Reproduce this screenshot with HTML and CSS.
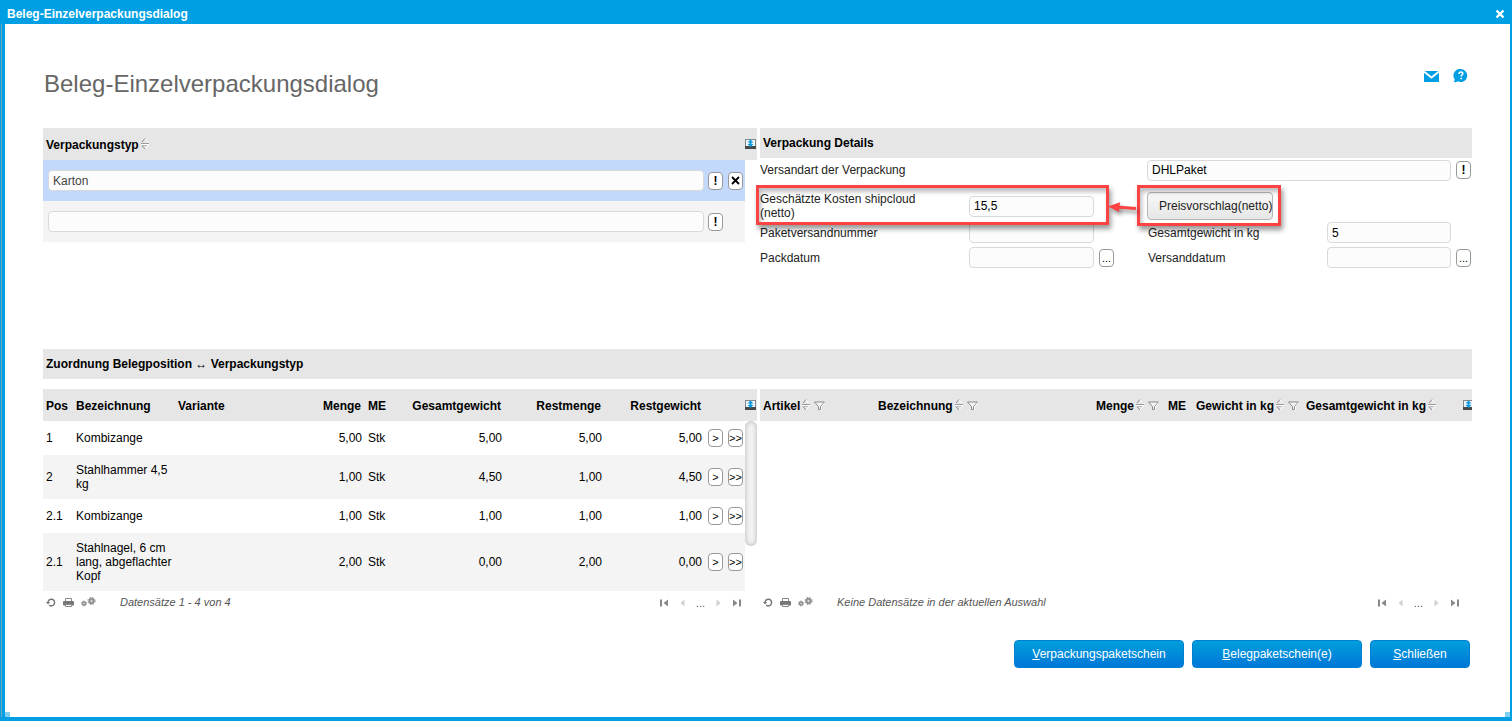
FILE: index.html
```html
<!DOCTYPE html>
<html lang="de">
<head>
<meta charset="utf-8">
<title>Beleg-Einzelverpackungsdialog</title>
<link rel="stylesheet" href="styles.css">
</head>
<body>
<svg class="defs" width="0" height="0" aria-hidden="true">
  <symbol id="sort" viewBox="0 0 8 12">
    <path d="M4 1L7 4.500M7 7.500L4 11" fill="none" stroke="#fff"/>
    <path d="M0 6.500h8" stroke="#fff"/><path d="M0 5.500h8" stroke="#999"/>
    <path d="M4 .5L1 4M1 7.500L4 11" fill="none" stroke="#888"/><path d="M1 7.500h5" stroke="#bbb"/>
  </symbol>
  <symbol id="filter" viewBox="0 0 12 10">
    <path d="M.5 1h10L6.500 5.500v3l-2 0v-3z" fill="#f6f6f6" stroke="#888"/><path d="M11 1.500L7.500 5.500V9.500" fill="none" stroke="#fff"/>
  </symbol>
  <symbol id="export" viewBox="0 0 11 10">
    <path d="M0 0h11v8H0z" fill="#7f898e"/><path d="M1 1h9v6H1z" fill="#eef5f8"/><path d="M0 7h11v3H0z" fill="#45494c"/>
    <path d="M5.500 .5L8.500 3.500H6.500V5h2L5.500 8L2.500 5h2V3.500h-2z" fill="#0b9ae0"/>
  </symbol>
  <symbol id="reload" viewBox="0 0 10 9">
    <path d="M2 4.500a3.300 3.300 0 1 1 1.200 2.600" fill="none" stroke="#777" stroke-width="1.500"/><path d="M0 4h4.200L2 6.500z" fill="#777"/>
  </symbol>
  <symbol id="print" viewBox="0 0 11 9">
    <path d="M2.500 3V.5h6V3" fill="#fff" stroke="#888"/><rect y="3" width="11" height="4.500" rx="1" fill="#777"/><path d="M2.500 6.500h6v2h-6z" fill="#fff" stroke="#888"/>
  </symbol>
  <symbol id="gears" viewBox="0 0 15 10">
    <g fill="#999" stroke="#888"><circle cx="10.500" cy="4" r="2.700"/><circle cx="10.500" cy="4" r="3.600" fill="none" stroke-dasharray="1.500 1.400"/><circle cx="3" cy="6.500" r="1.800"/><circle cx="3" cy="6.500" r="2.500" fill="none" stroke-dasharray="1 1"/></g>
    <circle cx="10.500" cy="4" r="1" fill="#ddd"/><circle cx="3" cy="6.500" r=".8" fill="#ddd"/>
  </symbol>
  <symbol id="first" viewBox="0 0 9 8"><path d="M0 .5h2v7H0zM8 .5v7L3.500 4z" fill="#888"/></symbol>
  <symbol id="last" viewBox="0 0 9 8"><path d="M7 .5h2v7H7zM1 .5v7L5.500 4z" fill="#888"/></symbol>
  <symbol id="prev" viewBox="0 0 5 8"><path d="M4.500 .5v7L.5 4z" fill="#d0d0d0"/></symbol>
  <symbol id="next" viewBox="0 0 5 8"><path d="M.5 .5v7L4.500 4z" fill="#d0d0d0"/></symbol>
</svg>

<header class="titlebar">
  <span>Beleg-Einzelverpackungsdialog</span>
  <button class="plain" aria-label="Dialog schließen"><svg width="10" height="10" viewBox="0 0 10 10"><path d="M1.500 1.500l7 7M8.500 1.500l-7 7" stroke="#fff" stroke-width="2.400"/></svg></button>
</header>

<main class="dialog">
  <div class="heading">
    <h1>Beleg-Einzelverpackungsdialog</h1>
    <div class="heading-tools">
      <button class="plain" aria-label="E-Mail"><svg width="15" height="11" viewBox="0 0 15 11"><path d="M0 0h15v11H0z" fill="#009fe3"/><path d="M0 .5L7.500 6.500L15 .5" fill="none" stroke="#fff" stroke-width="1.800"/></svg></button>
      <button class="plain" aria-label="Hilfe"><svg width="15" height="14" viewBox="0 0 15 14"><path d="M8 0a6.500 6.500 0 1 1-3.200 12.300C3.500 13.200 1.500 13.300.5 13c.9-.8 1.200-1.600 1.200-2.800A6.500 6.500 0 0 1 8 0z" fill="#009fe3"/><path d="M6 4.900c0-1.200.8-1.900 1.900-1.900s1.900.6 1.900 1.600c0 1.300-1.600 1.300-1.600 2.900M8.200 8.700v1.500" fill="none" stroke="#fff" stroke-width="1.500"/></svg></button>
    </div>
  </div>

  <div class="columns top">
    <section>
      <table class="grid types">
        <colgroup><col><col class="w20"><col class="w20"><col class="w12"></colgroup>
        <thead><tr><th colspan="3">Verpackungstyp<svg class="sort"><use href="#sort"/></svg></th><th class="tool"><button class="plain" aria-label="Exportieren"><svg width="11" height="10"><use href="#export"/></svg></button></th></tr></thead>
        <tbody>
          <tr class="selected"><td><input class="field muted" aria-label="Verpackungstyp 1" value="Karton"></td><td><button class="mini bold">!</button></td><td><button class="mini" aria-label="Löschen"><svg width="9" height="9" viewBox="0 0 9 9"><path d="M1 1l7 7M8 1l-7 7" stroke="#000" stroke-width="1.800"/></svg></button></td><td></td></tr>
          <tr><td><input class="field" aria-label="Verpackungstyp 2"></td><td><button class="mini bold">!</button></td><td></td><td></td></tr>
        </tbody>
      </table>
    </section>

    <section>
      <h2 class="bar">Verpackung Details</h2>
      <form class="details">
        <label class="art" for="art">Versandart der Verpackung</label>
        <input class="field art-field" id="art" value="DHLPaket">
        <div class="after"><button type="button" class="mini bold">!</button></div>

        <label class="kosten" for="kosten">Geschätzte Kosten shipcloud (netto)</label>
        <div class="kosten"><input class="field" id="kosten" value="15,5"></div>
        <div class="kosten preis"><button type="button" class="suggest">Preisvorschlag(netto)</button></div>

        <label class="start" for="nummer">Paketversandnummer</label>
        <input class="field" id="nummer">
        <label class="right-label" for="gewicht">Gesamtgewicht in kg</label>
        <input class="field" id="gewicht" value="5">

        <label class="start" for="pack">Packdatum</label>
        <input class="field" id="pack">
        <div class="after-left"><button type="button" class="mini">...</button></div>
        <label class="right-label" for="versand">Versanddatum</label>
        <input class="field" id="versand">
        <div class="after"><button type="button" class="mini">...</button></div>

        <div class="mark mark-cost"></div>
        <div class="mark mark-price"></div>
        <svg class="arrow" width="30" height="16" viewBox="0 0 30 16"><path d="M29 8.500L9 7" stroke="#fc4242" stroke-width="3"/><path d="M1 6.500L13 2.200L12 12z" fill="#fc4242"/></svg>
      </form>
    </section>
  </div>

  <h2 class="bar">Zuordnung Belegposition ↔ Verpackungstyp</h2>

  <div class="columns lists">
    <section class="list">
      <div class="scroll">
      <table class="grid positions">
        <colgroup><col class="w30"><col class="w102"><col><col class="w100"><col class="w40"><col class="w100"><col class="w100"><col class="w100"><col class="w20"><col class="w20"><col class="w12"></colgroup>
        <thead><tr><th>Pos</th><th>Bezeichnung</th><th>Variante</th><th class="num">Menge</th><th>ME</th><th class="num">Gesamtgewicht</th><th class="num">Restmenge</th><th class="num">Restgewicht</th><th></th><th></th><th class="tool"><button class="plain" aria-label="Exportieren"><svg width="11" height="10"><use href="#export"/></svg></button></th></tr></thead>
        <tbody>
          <tr><td>1</td><td>Kombizange</td><td></td><td class="num">5,00</td><td>Stk</td><td class="num">5,00</td><td class="num">5,00</td><td class="num">5,00</td><td><button class="mini">&gt;</button></td><td><button class="mini">&gt;&gt;</button></td><td></td></tr>
          <tr><td>2</td><td>Stahlhammer 4,5 kg</td><td></td><td class="num">1,00</td><td>Stk</td><td class="num">4,50</td><td class="num">1,00</td><td class="num">4,50</td><td><button class="mini">&gt;</button></td><td><button class="mini">&gt;&gt;</button></td><td></td></tr>
          <tr><td>2.1</td><td>Kombizange</td><td></td><td class="num">1,00</td><td>Stk</td><td class="num">1,00</td><td class="num">1,00</td><td class="num">1,00</td><td><button class="mini">&gt;</button></td><td><button class="mini">&gt;&gt;</button></td><td></td></tr>
          <tr><td>2.1</td><td>Stahlnagel, 6 cm lang, abgeflachter Kopf</td><td></td><td class="num">2,00</td><td>Stk</td><td class="num">0,00</td><td class="num">2,00</td><td class="num">0,00</td><td><button class="mini">&gt;</button></td><td><button class="mini">&gt;&gt;</button></td><td></td></tr>
        </tbody>
      </table>
      <div class="thumb"></div>
      </div>
      <footer class="status">
        <button class="plain" aria-label="Neu laden"><svg width="10" height="9"><use href="#reload"/></svg></button>
        <button class="plain" aria-label="Drucken"><svg width="11" height="9"><use href="#print"/></svg></button>
        <button class="plain" aria-label="Einstellungen"><svg width="15" height="10"><use href="#gears"/></svg></button>
        <em>Datensätze 1 - 4 von 4</em>
        <nav class="pager"><button class="plain" aria-label="Erste Seite"><svg width="9" height="8"><use href="#first"/></svg></button><button class="plain" aria-label="Vorige Seite"><svg width="5" height="8"><use href="#prev"/></svg></button><span>...</span><button class="plain" aria-label="Nächste Seite"><svg width="5" height="8"><use href="#next"/></svg></button><button class="plain" aria-label="Letzte Seite"><svg width="9" height="8"><use href="#last"/></svg></button></nav>
      </footer>
    </section>

    <section class="list">
      <div class="scroll">
      <table class="grid articles">
        <colgroup><col class="w115"><col><col class="w72"><col class="w28"><col class="w110"><col class="w160"><col class="w9"></colgroup>
        <thead><tr><th>Artikel<svg class="sort"><use href="#sort"/></svg><svg class="filter"><use href="#filter"/></svg></th><th>Bezeichnung<svg class="sort"><use href="#sort"/></svg><svg class="filter"><use href="#filter"/></svg></th><th>Menge<svg class="sort"><use href="#sort"/></svg><svg class="filter"><use href="#filter"/></svg></th><th>ME</th><th>Gewicht in kg<svg class="sort"><use href="#sort"/></svg><svg class="filter"><use href="#filter"/></svg></th><th>Gesamtgewicht in kg<svg class="sort"><use href="#sort"/></svg></th><th class="tool"><button class="plain" aria-label="Exportieren"><svg width="9" height="10" viewBox="0 0 9 10"><use href="#export" width="11" height="10"/></svg></button></th></tr></thead>
      </table>
      </div>
      <footer class="status">
        <button class="plain" aria-label="Neu laden"><svg width="10" height="9"><use href="#reload"/></svg></button>
        <button class="plain" aria-label="Drucken"><svg width="11" height="9"><use href="#print"/></svg></button>
        <button class="plain" aria-label="Einstellungen"><svg width="15" height="10"><use href="#gears"/></svg></button>
        <em>Keine Datensätze in der aktuellen Auswahl</em>
        <nav class="pager narrow"><button class="plain" aria-label="Erste Seite"><svg width="9" height="8"><use href="#first"/></svg></button><button class="plain" aria-label="Vorige Seite"><svg width="5" height="8"><use href="#prev"/></svg></button><span>...</span><button class="plain" aria-label="Nächste Seite"><svg width="5" height="8"><use href="#next"/></svg></button><button class="plain" aria-label="Letzte Seite"><svg width="9" height="8"><use href="#last"/></svg></button></nav>
      </footer>
    </section>
  </div>

  <div class="actions">
    <button class="primary wide"><u>V</u>erpackungspaketschein</button>
    <button class="primary wide"><u>B</u>elegpaketschein(e)</button>
    <button class="primary"><u>S</u>chließen</button>
  </div>
  <i class="grip grip-left"></i><i class="grip grip-right"></i>
</main>
</body>
</html>
```
FILE: styles.css
```css
* { box-sizing: border-box; }

body {
  margin: 0;
  min-height: 100vh;
  display: flex;
  flex-direction: column;
  background: #009fe3;
  color: #000;
  font: 12px/14px "Liberation Sans", Arial, sans-serif;
}

button, input { font: inherit; color: inherit; }
svg { display: block; }
.defs { position: absolute; }

.plain {
  display: block;
  padding: 0;
  border: 0;
  background: none;
}

.titlebar {
  display: flex;
  align-items: center;
  justify-content: space-between;
  height: 24px;
  padding: 3px 7px 0;
  color: #fff;
  font-weight: bold;
}

.dialog {
  position: relative;
  flex: 1;
  margin: 0 2px 4px 5px;
  padding: 44px 38px 20px;
  background: #fff;
  box-shadow: -3px 0 #009fe3, -4px 0 #6fa9c4;
}

.heading {
  display: flex;
  justify-content: space-between;
  height: 60px;
}

h1 {
  margin: 0;
  padding-left: 1px;
  color: #666;
  font-size: 24px;
  font-weight: normal;
  line-height: 32px;
}

.heading-tools {
  display: flex;
  align-items: center;
  gap: 14px;
  height: 16px;
  padding-right: 4px;
}

.columns {
  display: grid;
  grid-template-columns: 714fr 712fr;
  gap: 3px;
}
.columns > section { min-width: 0; }
.top { min-height: 221px; align-items: start; }
.lists { margin-top: 10px; }

.bar {
  margin: 0;
  padding: 0 3px;
  background: #e6e6e6;
  font-size: 12px;
  line-height: 30px;
}

.grid {
  width: 100%;
  border-collapse: collapse;
  table-layout: fixed;
}
.grid th {
  height: 32px;
  padding: 1px 3px 0;
  background: #e6e6e6;
  text-align: left;
  white-space: nowrap;
}
.grid td { padding: 0 3px; }
.grid .num { text-align: right; }
.grid th.num { padding-right: 4px; }
.grid .tool { padding: 0; }
.grid tbody td:last-child { background: #fff; }
.positions td { height: 34px; padding: 8px 3px; }
.positions td:nth-child(2) { padding-right: 0; }
.positions td:nth-last-child(-n+3) { padding-top: 0; padding-bottom: 0; }
.positions tr:nth-child(even) { background: #f4f4f4; }
.types td { height: 41px; background: #f4f4f4; }
.types td:first-child { padding: 0 1px 0 5px; }
.types .selected td { background: #c3d9fb; }

.w9 { width: 9px; }
.w12 { width: 12px; }
.w20 { width: 20px; }
.w28 { width: 28px; }
.w30 { width: 30px; }
.w40 { width: 40px; }
.w72 { width: 72px; }
.w100 { width: 100px; }
.w102 { width: 102px; }
.w110 { width: 110px; }
.w115 { width: 115px; }
.w160 { width: 160px; }

.sort, .filter { display: inline-block; vertical-align: -1px; }
.sort { width: 8px; height: 12px; margin-left: 2px; }
.filter { width: 12px; height: 10px; margin-left: 4px; }

.field {
  display: block;
  width: 100%;
  min-width: 0;
  height: 21px;
  padding: 0 4px;
  border: 1px solid #d9d9d9;
  border-radius: 4px;
  background: #fcfcfc;
}
.muted { color: #444; }

.mini {
  display: flex;
  align-items: center;
  justify-content: center;
  width: 15px;
  height: 18px;
  padding: 0;
  border: 1px solid #999;
  border-radius: 4px;
  background: #fff;
  font-size: 11px;
}
.mini.bold { font-size: 12px; font-weight: bold; }

.details {
  position: relative;
  display: grid;
  grid-template-columns: 209fr 125fr 53fr 180fr 124fr 21fr;
  grid-template-rows: 24px 38px 25px 25px;
  align-items: center;
}
.details > * { min-width: 0; }
.details label { color: #222; }
.start { grid-column: 1; }
.art { grid-column: 1 / 4; }
.art-field { grid-column: 4 / 6; }
label.kosten { grid-column: 1; padding-right: 40px; }
.kosten { padding-top: 10px; }
.preis { grid-column: 4 / 6; }
.after { grid-column: 6; padding-left: 5px; }
.after-left { padding-left: 5px; }
.right-label { grid-column: 4; padding-left: 1px; }

.suggest {
  display: block;
  height: 28px;
  padding: 0 0 0 11px;
  border: 1px solid #b5b5b5;
  border-radius: 4px;
  background: linear-gradient(#f8f8f8, #e6e6e6);
  color: #222;
}

.mark {
  position: absolute;
  border: 3px solid #fc4242;
  box-shadow: 2px 4px 5px rgba(0, 0, 0, .4), inset 2px 4px 4px rgba(0, 0, 0, .25);
}
.mark-cost { left: -4px; right: 51%; top: 27px; height: 40px; }
.mark-price { left: 53%; top: 27px; width: 144px; height: 41px; }
.arrow { position: absolute; right: 47%; top: 42px; filter: drop-shadow(2px 3px 2px rgba(0, 0, 0, .45)); }

.list { display: flex; flex-direction: column; }
.scroll { position: relative; flex: 1; }
.thumb {
  position: absolute;
  top: 32px;
  right: 0;
  width: 12px;
  height: 125px;
  border-radius: 6px;
  background: #f2f2f2;
  box-shadow: inset 0 0 4px 1px #c4c4c4;
}

.status {
  display: flex;
  align-items: center;
  height: 24px;
  padding: 0 0 2px 3px;
  gap: 7px;
  color: #555;
  font-size: 11px;
}
.status em { margin-left: 17px; }
.pager {
  display: flex;
  align-items: center;
  gap: 11px;
  margin-left: auto;
  padding: 2px 16px 0 0;
}
.pager.narrow { padding-right: 13px; }

.actions {
  display: flex;
  justify-content: flex-end;
  gap: 8px;
  padding: 25px 2px 0 0;
}
.primary {
  min-width: 100px;
  height: 28px;
  padding: 0 10px;
  border: 1px solid #0080cf;
  border-radius: 4px;
  background: linear-gradient(#009fdc, #0077d8);
  color: #fff;
}
.wide { min-width: 170px; }

.grip {
  position: absolute;
  bottom: 0;
  width: 5px;
  height: 5px;
  background: #80cff1;
}
.grip-left { left: 0; }
.grip-right { right: 0; }
```
